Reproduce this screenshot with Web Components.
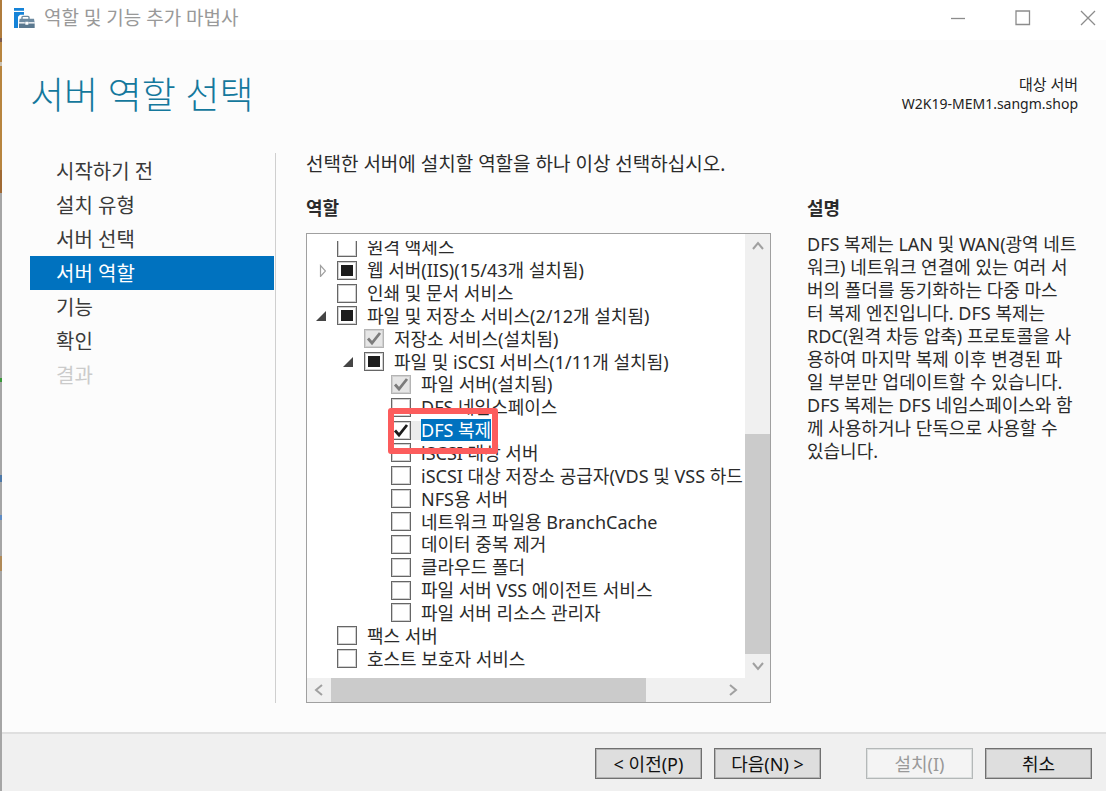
<!DOCTYPE html>
<html lang="ko">
<head>
<meta charset="utf-8">
<title>역할 및 기능 추가 마법사</title>
<style>
  body { margin: 0; font-family: "Noto Sans", "Noto Sans CJK KR", sans-serif; font-size: 18px; color: #2b2b2b; background: #fcfcfc; }
</style>
</head>
<body>
<wizard-window>
  <title-bar slot="title">역할 및 기능 추가 마법사</title-bar>
  <page-header slot="header" server="W2K19-MEM1.sangm.shop">서버 역할 선택</page-header>
  <step-nav slot="steps">
    <step-item>시작하기 전</step-item>
    <step-item>설치 유형</step-item>
    <step-item>서버 선택</step-item>
    <step-item current>서버 역할</step-item>
    <step-item>기능</step-item>
    <step-item>확인</step-item>
    <step-item disabled>결과</step-item>
  </step-nav>
  <role-tree slot="roles">
    <role-row>원격 액세스</role-row>
    <role-row state="partial" expander="closed">웹 서버(IIS)(15/43개 설치됨)</role-row>
    <role-row>인쇄 및 문서 서비스</role-row>
    <role-row state="partial" expander="open">파일 및 저장소 서비스(2/12개 설치됨)</role-row>
    <role-row level="1" state="installed">저장소 서비스(설치됨)</role-row>
    <role-row level="1" state="partial" expander="open">파일 및 iSCSI 서비스(1/11개 설치됨)</role-row>
    <role-row level="2" state="installed">파일 서버(설치됨)</role-row>
    <role-row level="2">DFS 네임스페이스</role-row>
    <role-row level="2" state="checked" selected>DFS 복제</role-row>
    <role-row level="2">iSCSI 대상 서버</role-row>
    <role-row level="2">iSCSI 대상 저장소 공급자(VDS 및 VSS 하드</role-row>
    <role-row level="2">NFS용 서버</role-row>
    <role-row level="2">네트워크 파일용 BranchCache</role-row>
    <role-row level="2">데이터 중복 제거</role-row>
    <role-row level="2">클라우드 폴더</role-row>
    <role-row level="2">파일 서버 VSS 에이전트 서비스</role-row>
    <role-row level="2">파일 서버 리소스 관리자</role-row>
    <role-row>팩스 서버</role-row>
    <role-row>호스트 보호자 서비스</role-row>
  </role-tree>
  <role-description slot="description">DFS 복제는 LAN 및 WAN(광역 네트<br>워크) 네트워크 연결에 있는 여러 서<br>버의 폴더를 동기화하는 다중 마스<br>터 복제 엔진입니다. DFS 복제는<br>RDC(원격 차등 압축) 프로토콜을 사<br>용하여 마지막 복제 이후 변경된 파<br>일 부분만 업데이트할 수 있습니다.<br>DFS 복제는 DFS 네임스페이스와 함<br>께 사용하거나 단독으로 사용할 수<br>있습니다.</role-description>
  <wizard-button slot="actions">&lt; 이전(P)</wizard-button>
  <wizard-button slot="actions">다음(N) &gt;</wizard-button>
  <wizard-button slot="actions" apart disabled>설치(I)</wizard-button>
  <wizard-button slot="actions">취소</wizard-button>
</wizard-window>

<script>
class BaseElement extends HTMLElement {
  render(html) {
    this.attachShadow({ mode: 'open' }).innerHTML = html;
  }
}

customElements.define('wizard-window', class extends BaseElement {
  connectedCallback() {
    this.render(`
      <style>
        :host { display: grid; grid-template-columns: 2px 1fr; min-height: 100vh; }
        .edge { background: linear-gradient(#b07c3c 0 38px, #7a5a50 38px 42px, #b8853f 42px 62px, #c9c0b0 62px 66px, #b8853f 66px 170px, #a06a34 170px 193px, #a6a6a6 193px 378px, #3a9a3a 378px 382px, #a6a6a6 382px 475px, #4d79a8 475px 482px, #a6a6a6 482px 515px, #5f8cc4 515px 520px, #a6a6a6 520px 556px, #b08a58 556px 571px, #a6a6a6 571px); }
        .frame { display: flex; flex-direction: column; min-width: 0; }
        main { flex: 1; display: grid; grid-template-columns: 244px 2px minmax(0, 1fr) 275px; padding: 0 24px 29px 28px; }
        .rule { background: #cfcfcf; margin-left: 1px; }
        .roles { display: flex; flex-direction: column; margin: 0 36px 0 30px; min-width: 0; }
        p, h2 { margin: 0; }
        p { font-size: 19px; line-height: 22px; }
        h2 { font-size: 18px; line-height: 24px; font-weight: 700; }
        .roles h2 { margin: 21px 0 13px; }
        ::slotted(role-tree) { flex: 1; }
        aside { padding-top: 43px; }
        aside h2 { margin-bottom: 13px; }
        footer { display: flex; justify-content: flex-end; gap: 12px; padding: 14px 14px 12px; background: #f0f0f0; border-top: 2px solid #dfdfdf; }
      </style>
      <div class="edge"></div>
      <div class="frame">
        <slot name="title"></slot>
        <slot name="header"></slot>
        <main>
          <slot name="steps"></slot>
          <div class="rule"></div>
          <section class="roles">
            <p>선택한 서버에 설치할 역할을 하나 이상 선택하십시오.</p>
            <h2>역할</h2>
            <slot name="roles"></slot>
          </section>
          <aside>
            <h2>설명</h2>
            <slot name="description"></slot>
          </aside>
        </main>
        <footer><slot name="actions"></slot></footer>
      </div>`);
  }
});

customElements.define('title-bar', class extends BaseElement {
  connectedCallback() {
    this.render(`
      <style>
        :host { display: flex; align-items: center; height: 40px; box-sizing: border-box; padding: 0 10px 4px 12px; background: #fff; color: #999; }
        .name { flex: 1; margin-left: 9px; line-height: 24px; font-size: 19px; }
        .tools { display: flex; gap: 49px; }
        button { all: unset; display: block; width: 16px; height: 16px; }
        svg { display: block; }
      </style>
      <svg width="21" height="20" viewBox="0 0 63 60" aria-hidden="true">
        <path fill="#1583d8" d="M0 0h30v8H0zM0 12h30v8H18l-6 6v34H0z"/>
        <path fill="#fff" d="M13 29h8v-8h26v8h16v31H13z"/>
        <path fill="none" stroke="#6d8aa0" stroke-width="4" d="M24 33v-5q0-3 3-3h15q3 0 3 3v5"/>
        <path fill="#6d8aa0" d="M17 32h43l2 12H15z"/>
        <path fill="#5b7990" d="M15 46h47v14H15z"/>
        <path fill="#fff" d="M15 43h17v3H15zM44 43h18v3H44zM34 41h9v9h-9z"/>
      </svg>
      <span class="name"><slot></slot></span>
      <div class="tools">
        <button aria-label="최소화"><svg width="16" height="16" fill="none" stroke="#8c8c8c" stroke-width="1.3"><path d="M1 8.5h14"/></svg></button>
        <button aria-label="최대화"><svg width="16" height="16" fill="none" stroke="#8c8c8c" stroke-width="1.3"><path d="M1 1h13.500v13.500H1z"/></svg></button>
        <button aria-label="닫기"><svg width="16" height="16" fill="none" stroke="#8c8c8c" stroke-width="1.3"><path d="M1 1l14 14M15 1L1 15"/></svg></button>
      </div>`);
  }
});

customElements.define('page-header', class extends BaseElement {
  connectedCallback() {
    this.render(`
      <style>
        :host { display: flex; justify-content: space-between; height: 113px; box-sizing: border-box; padding: 31px 28px 0 28px; }
        h1 { margin: 0; font-size: 37px; line-height: 48px; font-weight: 300; color: #14789c; }
        .target { padding-top: 4px; text-align: right; font-size: 14px; line-height: 19px; color: #222; }
        .caption { font-size: 15px; }
      </style>
      <h1><slot></slot></h1>
      <div class="target"><span class="caption">대상 서버</span><br>${this.getAttribute('server')}</div>`);
  }
});

customElements.define('step-nav', class extends BaseElement {
  connectedCallback() {
    this.render(`
      <style>:host { display: block; padding-top: 1px; } nav { display: flex; flex-direction: column; }</style>
      <nav aria-label="단계"><slot></slot></nav>`);
  }
});

customElements.define('step-item', class extends BaseElement {
  connectedCallback() {
    const off = this.hasAttribute('disabled');
    this.render(`
      <style>
        :host { display: block; font-size: 20px; line-height: 32px; color: #3a3a3a; }
        :host([current]) { background: #0072bf; color: #fff; }
        :host([disabled]) { color: #cbcbcb; }
        a, span { display: block; padding: 2px 0 0 26px; color: inherit; text-decoration: none; }
      </style>
      ${off ? '<span aria-disabled="true"><slot></slot></span>' : '<a href="#"><slot></slot></a>'}`);
  }
});

customElements.define('role-tree', class extends BaseElement {
  connectedCallback() {
    this.render(`
      <style>
        :host { display: grid; grid-template-columns: minmax(0, 1fr) 25px; grid-template-rows: 1fr 24px; background: #fff; border: 1px solid #a0a0a0; }
        .view { overflow: hidden; margin-top: 7px; display: grid; }
        .rows { display: grid; grid-auto-rows: 1fr; margin: -5px 0 8px; min-width: 0; }
        scroll-bar { min-width: 0; }
        .corner { background: #f0f0f0; }
      </style>
      <div class="view"><div class="rows"><slot></slot></div></div>
      <scroll-bar vertical before="175" thumb="218" after="0"></scroll-bar>
      <scroll-bar before="0" thumb="314" after="75"></scroll-bar>
      <div class="corner"></div>`);
  }
});

customElements.define('scroll-bar', class extends BaseElement {
  connectedCallback() {
    const v = this.hasAttribute('vertical');
    const part = n => `flex: ${this.getAttribute(n)} 0 0`;
    this.render(`
      <style>
        :host { display: flex; background: #f0f0f0; }
        :host([vertical]) { flex-direction: column; }
        button { all: unset; flex: 0 0 24px; display: grid; place-items: center; }
        .thumb { background: #cbcbcb; }
        svg { display: block; fill: none; stroke: #a0a0a0; stroke-width: 2; }
      </style>
      <button aria-label="${v ? '위로' : '왼쪽으로'}"><svg width="12" height="12"><path d="${v ? 'M1 9l5-6 5 6' : 'M9 1L3 6l6 5'}"/></svg></button>
      <div style="${part('before')}"></div>
      <div class="thumb" style="${part('thumb')}"></div>
      <div style="${part('after')}"></div>
      <button aria-label="${v ? '아래로' : '오른쪽으로'}"><svg width="12" height="12"><path d="${v ? 'M1 3l5 6 5-6' : 'M3 1l6 5-6 5'}"/></svg></button>`);
  }
});

customElements.define('role-row', class extends BaseElement {
  connectedCallback() {
    const state = this.getAttribute('state');
    const exp = this.getAttribute('expander');
    const tick = state === 'checked' || state === 'installed';
    const arrow = exp === 'open'
      ? '<path fill="#454545" d="M10 2v10H0z"/>'
      : '<path fill="#fff" stroke="#a0a0a0" stroke-width="1.2" d="M4.500 1.500v11l5-5.500z"/>';
    this.render(`
      <style>
        :host { --indent: 0px; display: flex; align-items: center; position: relative; min-height: 0; padding-left: calc(9px + var(--indent)); white-space: nowrap; color: #2b2b2b; }
        :host([level="1"]) { --indent: 27px; }
        :host([level="2"]) { --indent: 54px; }
        .toggle { all: unset; width: 10px; height: 13px; margin-right: 11px; flex: none; }
        svg { display: block; }
        .box { display: grid; flex: none; }
        .box > * { grid-area: 1 / 1; }
        input { appearance: none; margin: 0; width: 20px; height: 19px; box-sizing: border-box; border: 1px solid #666; box-shadow: inset 0 0 0 1px #d0d0d0; background: #fff; }
        input:disabled { border-color: #b4b4b4; background: #e6e6e6; }
        .box svg { pointer-events: none; }
        label { margin-left: 10px; line-height: 22px; font-size: 18px; }
        :host([selected]) label { background: #0072bf; color: #fff; }
        :host([selected]) .box { box-shadow: 10px 0 0 #ececec; }
        .mark { position: absolute; left: 81px; top: -11px; width: 98px; height: 34px; border: 6px solid #fc5c5c; border-radius: 3px; z-index: 1; }
      </style>
      ${exp ? `<button class="toggle" aria-label="확장"><svg width="10" height="13">${arrow}</svg></button>` : '<span class="toggle"></span>'}
      <span class="box">
        <input type="checkbox" id="c" ${tick ? 'checked' : ''} ${state === 'installed' ? 'disabled' : ''}>
        <svg width="20" height="19">
          ${state === 'partial' ? '<path fill="#1c1c1c" d="M4 4h12v11H4z"/>' : ''}
          ${tick ? `<path fill="none" stroke="${state === 'checked' ? '#1c1c1c' : '#7c7c7c'}" stroke-width="2.800" d="M4 9.500l4 4.500 8-10"/>` : ''}
        </svg>
      </span>
      <label for="c"><slot></slot></label>
      ${this.hasAttribute('selected') ? '<div class="mark"></div>' : ''}`);
    if (state === 'partial') this.shadowRoot.querySelector('input').indeterminate = true;
  }
});

customElements.define('role-description', class extends BaseElement {
  connectedCallback() {
    this.render(`<style>:host { display: block; line-height: 23px; font-size: 18px; white-space: nowrap; }</style><slot></slot>`);
  }
});

customElements.define('wizard-button', class extends BaseElement {
  connectedCallback() {
    this.render(`
      <style>
        :host { display: block; }
        :host([apart]) { margin-left: 33px; }
        button { display: block; width: 107px; height: 31px; margin: 0; padding: 0; box-sizing: border-box; font: inherit; font-size: 18px; line-height: 24px; color: #111; background: #dedede; border: 1px solid #707070; box-shadow: inset 0 0 0 1px #b4b4b4; border-radius: 0; }
        button:disabled { color: #999; background: #f4f4f4; border-color: #b4b8b8; box-shadow: inset 0 0 0 1px #dde0e0; }
      </style>
      <button type="button" ${this.hasAttribute('disabled') ? 'disabled' : ''}><slot></slot></button>`);
  }
});
</script>
</body>
</html>
